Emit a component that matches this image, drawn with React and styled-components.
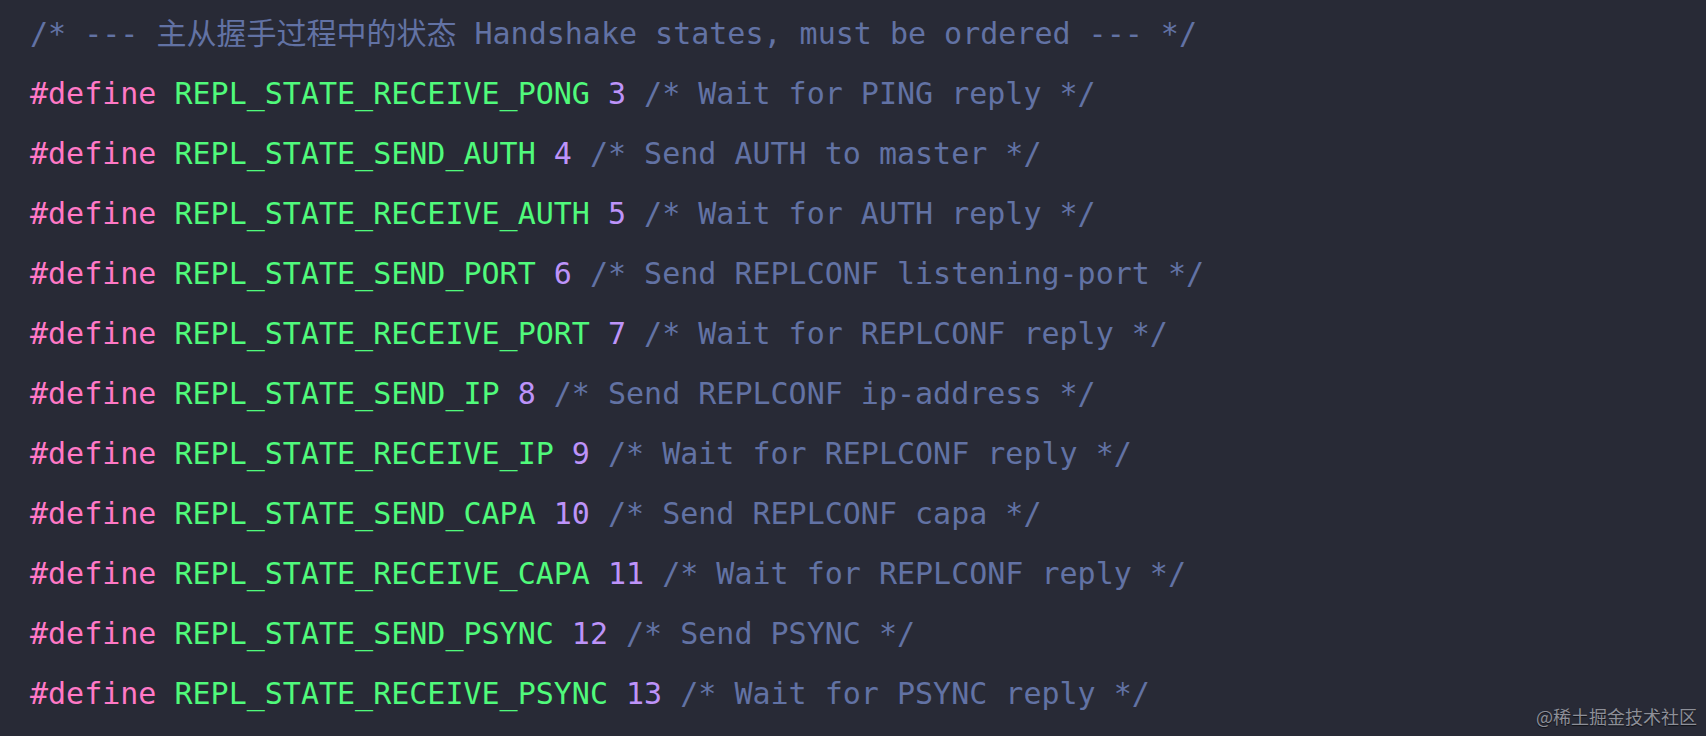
import React from 'react';
import styled, { createGlobalStyle } from 'styled-components';

const GlobalStyle = createGlobalStyle`
  html, body {
    margin: 0;
    padding: 0;
    background: #282a36;
  }
`;

const Editor = styled.div`
  position: relative;
  width: 1706px;
  height: 736px;
  box-sizing: border-box;
  padding: 4px 0 0 30px;
  background: #282a36;
  overflow: hidden;
  font-family: "DejaVu Sans Mono", "Noto Sans CJK SC", monospace;
  font-size: 30px;
`;

const Line = styled.div`
  height: 60px;
  line-height: 60px;
  white-space: pre;
`;

const Keyword = styled.span`
  color: #ff79c6;
`;

const Name = styled.span`
  color: #50fa7b;
`;

const Num = styled.span`
  color: #bd93f9;
`;

const Comment = styled.span`
  color: #6272a4;
`;

const Watermark = styled.div`
  position: absolute;
  right: 9px;
  bottom: 8px;
  font-family: "Noto Sans CJK SC", sans-serif;
  font-size: 18px;
  line-height: 24px;
  color: #8d8f98;
  text-shadow: 0 1px 1px rgba(0, 0, 0, 0.6);
`;

const defines = [
  ['REPL_STATE_RECEIVE_PONG', 3, 'Wait for PING reply'],
  ['REPL_STATE_SEND_AUTH', 4, 'Send AUTH to master'],
  ['REPL_STATE_RECEIVE_AUTH', 5, 'Wait for AUTH reply'],
  ['REPL_STATE_SEND_PORT', 6, 'Send REPLCONF listening-port'],
  ['REPL_STATE_RECEIVE_PORT', 7, 'Wait for REPLCONF reply'],
  ['REPL_STATE_SEND_IP', 8, 'Send REPLCONF ip-address'],
  ['REPL_STATE_RECEIVE_IP', 9, 'Wait for REPLCONF reply'],
  ['REPL_STATE_SEND_CAPA', 10, 'Send REPLCONF capa'],
  ['REPL_STATE_RECEIVE_CAPA', 11, 'Wait for REPLCONF reply'],
  ['REPL_STATE_SEND_PSYNC', 12, 'Send PSYNC'],
  ['REPL_STATE_RECEIVE_PSYNC', 13, 'Wait for PSYNC reply'],
];

const App = () => {
  return (
    <>
      <GlobalStyle />
      <Editor>
        <Line>
          <Comment>/* --- 主从握手过程中的状态 Handshake states, must be ordered --- */</Comment>
        </Line>
        {defines.map(([name, value, note]) => (
          <Line key={name}>
            <Keyword>#define</Keyword> <Name>{name}</Name> <Num>{value}</Num>{' '}
            <Comment>/* {note} */</Comment>
          </Line>
        ))}
        <Watermark>@稀土掘金技术社区</Watermark>
      </Editor>
    </>
  );
};

export default App;
